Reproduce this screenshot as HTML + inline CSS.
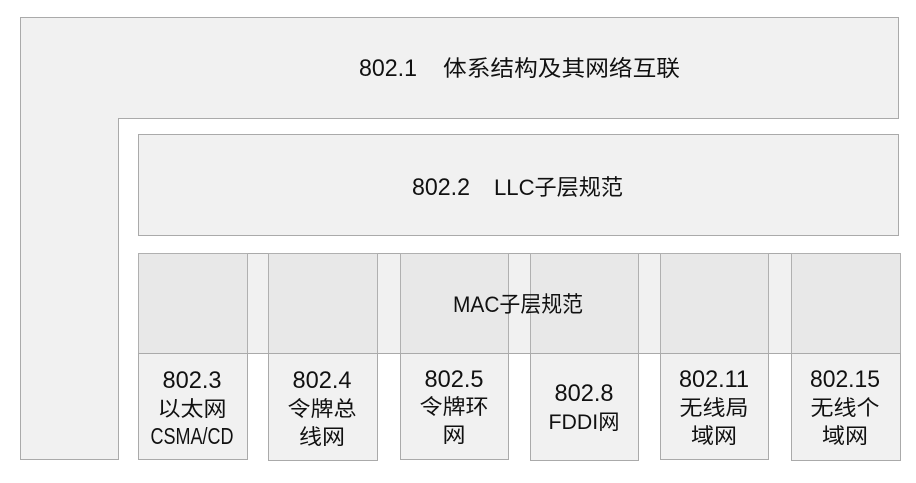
<!DOCTYPE html>
<html><head><meta charset="utf-8"><style>
html,body{margin:0;padding:0;background:#fff;}
svg{display:block;}
text{font-family:"Liberation Sans","Noto Sans CJK SC",sans-serif;fill:#111;}
.l{font-size:24px;}
</style></head><body>
<svg width="916" height="483" viewBox="0 0 916 483" xmlns="http://www.w3.org/2000/svg">
<polygon points="20.5,17.5 898.5,17.5 898.5,118.5 118.5,118.5 118.5,459.5 20.5,459.5" fill="#f1f1f1" stroke="#aaa" stroke-width="1"/>
<rect x="138.5" y="134.5" width="760" height="101" fill="#f1f1f1" stroke="#aaa"/>
<rect x="138.5" y="253.5" width="762" height="100" fill="#f1f1f1" stroke="#aaa"/>
<g fill="#e8e8e8" stroke="#b0b0b0">
<rect x="138.5" y="253.5" width="109" height="100"/>
<rect x="268.5" y="253.5" width="109" height="100"/>
<rect x="400.5" y="253.5" width="108" height="100"/>
<rect x="530.5" y="253.5" width="108" height="100"/>
<rect x="660.5" y="253.5" width="108" height="100"/>
<rect x="791.5" y="253.5" width="109" height="100"/>
</g>
<g fill="#f1f1f1" stroke="#aaa">
<rect x="138.5" y="353.5" width="109" height="106"/>
<rect x="268.5" y="353.5" width="109" height="107"/>
<rect x="400.5" y="353.5" width="108" height="106"/>
<rect x="530.5" y="353.5" width="108" height="107"/>
<rect x="660.5" y="353.5" width="108" height="106"/>
<rect x="791.5" y="353.5" width="109" height="107"/>
</g>
<g font-size="22">
<text class="l" x="359" y="76" textLength="58" lengthAdjust="spacingAndGlyphs">802.1</text>
<text x="443" y="76" textLength="237" lengthAdjust="spacingAndGlyphs">体系结构及其网络互联</text>
<text class="l" x="412" y="195" textLength="58" lengthAdjust="spacingAndGlyphs">802.2</text>
<text x="494" y="195" textLength="129" lengthAdjust="spacingAndGlyphs">LLC子层规范</text>
<text x="453" y="312" textLength="130" lengthAdjust="spacingAndGlyphs">MAC子层规范</text>
</g>
<g font-size="21" text-anchor="middle">
<text class="l" x="192" y="388" textLength="59" lengthAdjust="spacingAndGlyphs">802.3</text>
<text x="192" y="416" textLength="69" lengthAdjust="spacingAndGlyphs">以太网</text>
<text style="font-size:23px" x="192" y="444" textLength="83" lengthAdjust="spacingAndGlyphs">CSMA/CD</text>

<text class="l" x="322" y="388" textLength="59" lengthAdjust="spacingAndGlyphs">802.4</text>
<text x="322" y="416" textLength="69" lengthAdjust="spacingAndGlyphs">令牌总</text>
<text x="322" y="444" textLength="46" lengthAdjust="spacingAndGlyphs">线网</text>

<text class="l" x="454" y="387" textLength="59" lengthAdjust="spacingAndGlyphs">802.5</text>
<text x="454" y="414" textLength="69" lengthAdjust="spacingAndGlyphs">令牌环</text>
<text x="454" y="442" textLength="23" lengthAdjust="spacingAndGlyphs">网</text>

<text class="l" x="584" y="401" textLength="59" lengthAdjust="spacingAndGlyphs">802.8</text>
<text x="584" y="429" textLength="71" lengthAdjust="spacingAndGlyphs">FDDI网</text>

<text class="l" x="714" y="387" textLength="70" lengthAdjust="spacingAndGlyphs">802.11</text>
<text x="714" y="415" textLength="69" lengthAdjust="spacingAndGlyphs">无线局</text>
<text x="714" y="443" textLength="46" lengthAdjust="spacingAndGlyphs">域网</text>

<text class="l" x="845" y="387" textLength="70" lengthAdjust="spacingAndGlyphs">802.15</text>
<text x="845" y="415" textLength="69" lengthAdjust="spacingAndGlyphs">无线个</text>
<text x="845" y="443" textLength="46" lengthAdjust="spacingAndGlyphs">域网</text>
</g>
</svg>
</body></html>
